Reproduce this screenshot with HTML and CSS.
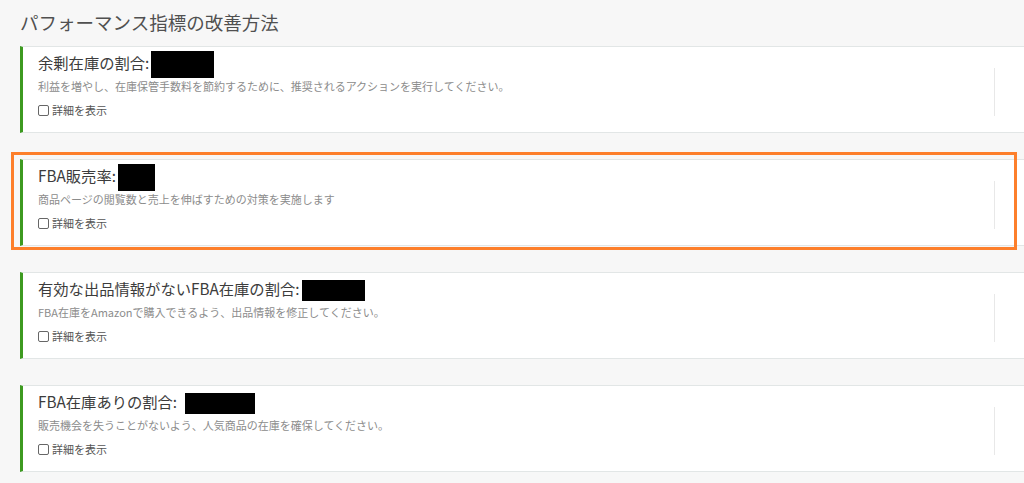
FILE: index.html
```html
<!DOCTYPE html>
<html lang="ja">
<head>
<meta charset="utf-8">
<title>パフォーマンス指標の改善方法</title>
<link rel="stylesheet" href="styles.css">
</head>
<body>
<div class="page">
  <h1 class="page-title">パフォーマンス指標の改善方法</h1>
  <div class="cards">
    <div class="card">
      <div class="card-main">
        <div class="card-title">余剰在庫の割合:<span class="redact redact-a"></span></div>
        <div class="card-desc">利益を増やし、在庫保管手数料を節約するために、推奨されるアクションを実行してください。</div>
        <label class="details"><span class="check"></span>詳細を表示</label>
      </div>
      <div class="card-side"></div>
    </div>
    <div class="card card-highlight">
      <div class="card-main">
        <div class="card-title">FBA販売率:<span class="redact redact-b"></span></div>
        <div class="card-desc">商品ページの閲覧数と売上を伸ばすための対策を実施します</div>
        <label class="details"><span class="check"></span>詳細を表示</label>
      </div>
      <div class="card-side"></div>
      <div class="highlight-frame"></div>
    </div>
    <div class="card">
      <div class="card-main">
        <div class="card-title">有効な出品情報がないFBA在庫の割合:<span class="redact redact-c"></span></div>
        <div class="card-desc">FBA在庫をAmazonで購入できるよう、出品情報を修正してください。</div>
        <label class="details"><span class="check"></span>詳細を表示</label>
      </div>
      <div class="card-side"></div>
    </div>
    <div class="card">
      <div class="card-main">
        <div class="card-title">FBA在庫ありの割合: <span class="redact redact-d"></span></div>
        <div class="card-desc">販売機会を失うことがないよう、人気商品の在庫を確保してください。</div>
        <label class="details"><span class="check"></span>詳細を表示</label>
      </div>
      <div class="card-side"></div>
    </div>
  </div>
</div>
</body>
</html>
```

FILE: styles.css
```css
html, body {
  margin: 0;
  padding: 0;
  background: #f7f7f7;
  overflow: hidden;
}

body {
  font-family: "Noto Sans CJK JP", "Noto Sans", "Liberation Sans", sans-serif;
  color: #444;
}

.page {
  width: 1024px;
  height: 483px;
  overflow: hidden;
}

.page-title {
  margin: 0 0 11px 0;
  padding: 9px 0 0 20px;
  font-size: 18.5px;
  line-height: 26px;
  font-weight: 400;
  color: #505050;
}

.cards {
  display: flex;
  flex-direction: column;
  gap: 26px;
  padding-left: 20px;
}

.card {
  position: relative;
  display: flex;
  align-items: center;
  width: 1010px;
  height: 87px;
  box-sizing: border-box;
  background: #ffffff;
  border-top: 1px solid #e2e6e6;
  border-bottom: 1px solid #e2e6e6;
  border-left: 3px solid #3d9a20;
}

.card-main {
  flex: 1;
  align-self: flex-start;
  padding: 5px 0 0 15px;
}

.card-title {
  font-size: 15.3px;
  line-height: 20px;
  color: #3c3c3c;
  white-space: nowrap;
}

.redact {
  display: inline-block;
  background: #000;
  vertical-align: middle;
  margin: -4px 0 -4px 2px;
  height: 27px;
}

.redact-a { width: 63px; }
.redact-b { width: 37px; }
.redact-c { width: 63px; height: 21px; margin-top: -1px; margin-bottom: -1px; }
.redact-d { width: 70px; height: 21px; margin-top: -1px; margin-bottom: -1px; margin-left: 4px; }

.card-desc {
  margin-top: 4px;
  font-size: 11px;
  line-height: 16px;
  color: #8c8c8c;
  white-space: nowrap;
}

.details {
  display: flex;
  align-items: center;
  margin-top: 8px;
  font-size: 11px;
  line-height: 16px;
  color: #555;
}

.check {
  display: inline-block;
  width: 9px;
  height: 9px;
  border: 1px solid #666;
  border-radius: 2px;
  background: #fff;
  margin-right: 3px;
}

.card-side {
  width: 34px;
  height: 48px;
  margin-right: 1px;
  border-left: 1px solid #e8e8e8;
  margin-top: 4px;
}

.highlight-frame {
  position: absolute;
  left: -12px;
  top: -8px;
  width: 1006px;
  height: 98px;
  box-sizing: border-box;
  border: 3px solid #fd7f2b;
  pointer-events: none;
}
```
